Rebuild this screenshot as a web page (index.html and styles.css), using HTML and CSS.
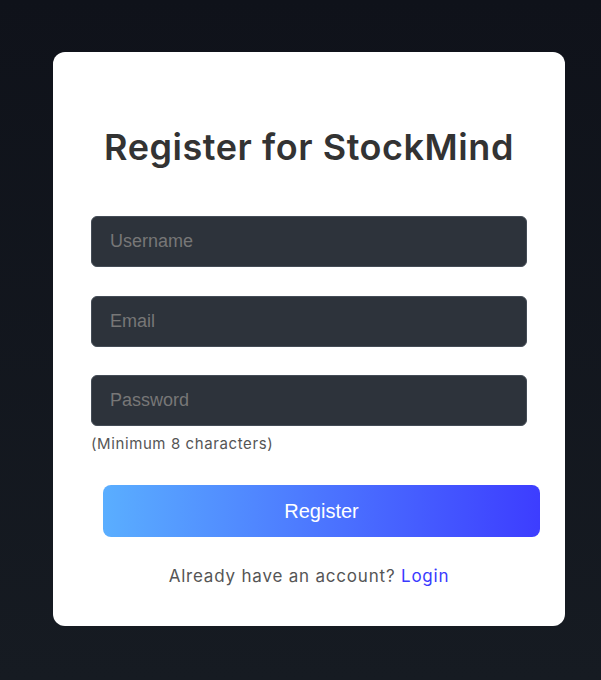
FILE: index.html
```html
<!DOCTYPE html>
<html lang="en">
<head>
<meta charset="utf-8">
<title>Register for StockMind</title>
<link rel="stylesheet" href="styles.css">
</head>
<body>
<main class="page">
  <section class="card">
    <h1 class="title">Register for StockMind</h1>
    <form class="form">
      <input class="field" type="text" placeholder="Username">
      <input class="field field-mid" type="email" placeholder="Email">
      <div class="group">
        <input class="field" type="password" placeholder="Password">
        <small class="hint">(Minimum 8 characters)</small>
      </div>
      <button class="btn" type="button">Register</button>
    </form>
    <p class="footer">Already have an account? <a class="link" href="#">Login</a></p>
  </section>
</main>
</body>
</html>
```
FILE: styles.css
```css
* { box-sizing: border-box; }
html, body { margin: 0; height: 100%; }
body {
  background: linear-gradient(180deg, #0f121a 0%, #161b22 100%);
  font-family: Inter, "Open Sans", sans-serif;
}
.page {
  padding: 52px 36px 0 53px;
}
.card {
  width: 512px;
  height: 574px;
  background: #fff;
  border-radius: 12px;
  padding: 70px 38px 0 38px;
}
.title {
  margin: 0;
  text-align: center;
  font-size: 36px;
  font-weight: 600;
  letter-spacing: 0.55px;
  color: #333;
  line-height: 50px;
}
.form {
  margin-top: 44px;
  display: flex;
  flex-direction: column;
}
.field {
  display: block;
  width: 436px;
  height: 51px;
  background: #2d333b;
  border: 1px solid #444c56;
  border-radius: 6px;
  padding: 0 18px;
  font-family: "Liberation Sans", Arial, sans-serif;
  font-size: 18px;
  color: #ddd;
  margin-bottom: 29px;
}
.field-mid { margin-bottom: 28px; }
.field::placeholder { color: #777; }
.group .field { margin-bottom: 7px; }
.hint {
  display: block;
  font-size: 15px;
  letter-spacing: 0.6px;
  color: #555;
  line-height: 22px;
}
.btn {
  margin: 30px 0 0 12px;
  width: 437px;
  height: 52px;
  border: 0;
  border-radius: 8px;
  background: linear-gradient(90deg, #5aaeff 0%, #3d3dff 100%);
  color: #fff;
  font-family: "Liberation Sans", Arial, sans-serif;
  font-size: 20px;
}
.footer {
  margin: 29px 0 0;
  text-align: center;
  font-size: 17px;
  letter-spacing: 0.8px;
  color: #555;
}
.link { color: #3a3aff; text-decoration: none; }
```
